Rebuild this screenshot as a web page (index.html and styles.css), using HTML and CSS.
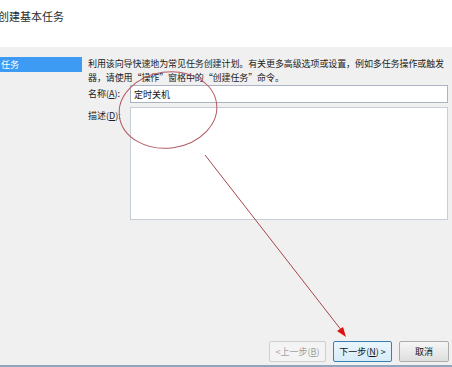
FILE: index.html
```html
<!DOCTYPE html>
<html lang="zh-CN">
<head>
    <meta charset="UTF-8">
    <title>创建基本任务向导</title>
    <link rel="stylesheet" href="styles.css">
</head>
<body>
    <div class="wizard">
        <div class="header">
            <h1>创建基本任务</h1>
        </div>
        <div class="main">
            <div class="nav">
                <div class="nav-item active">任务</div>
            </div>
            <div class="content">
                <p class="intro">利用该向导快速地为常见任务创建计划。有关更多高级选项或设置，例如多任务操作或触发器，请使用“操作”窗格中的“创建任务”命令。</p>
                <div class="field field-name">
                    <label for="task-name">名称(<u>A</u>):</label>
                    <input type="text" id="task-name" value="定时关机">
                </div>
                <div class="field">
                    <label for="task-desc">描述(<u>D</u>):</label>
                    <textarea id="task-desc"></textarea>
                </div>
            </div>
        </div>
        <div class="footer">
            <button class="btn btn-back" disabled>&lt;上一步(<u>B</u>)</button>
            <button class="btn btn-default">下一步(<u>N</u>) &gt;</button>
            <button class="btn btn-cancel">取消</button>
        </div>
        <div class="bottom-bar"></div>

        <svg class="annotation" width="452" height="367" viewBox="0 0 452 367">
            <ellipse cx="168" cy="110" rx="49" ry="38" transform="rotate(-8 168 110)" fill="none" stroke="#b25a62" stroke-width="1"/>
            <line x1="205" y1="155" x2="342" y2="331" stroke="#a8444c" stroke-width="1"/>
            <polygon points="346,337 337,331 343,327" fill="#e01010"/>
        </svg>
    </div>
</body>
</html>
```

FILE: styles.css
```css
* {
    margin: 0;
    padding: 0;
    box-sizing: border-box;
}

body {
    font-family: "Noto Sans CJK SC", "DejaVu Sans", sans-serif;
    background-color: #f0f0f0;
    width: 452px;
    height: 367px;
    overflow: hidden;
}

.wizard {
    position: relative;
    display: flex;
    flex-direction: column;
    height: 367px;
}

.header {
    background-color: #ffffff;
    height: 47px;
    padding-top: 7px;
}

.header h1 {
    font-size: 11px;
    font-weight: normal;
    color: #2b2b2b;
    text-indent: -2px;
    line-height: 18px;
}

.main {
    display: flex;
    flex: 1;
    padding-top: 10px;
}

.nav {
    width: 88px;
    padding-right: 6px;
}

.nav-item {
    height: 15px;
    font-size: 9px;
    line-height: 15px;
    padding-left: 1px;
    color: #333;
}

.nav-item.active {
    background-color: #3d9bf3;
    color: #ffffff;
}

.content {
    width: 360px;
}

.intro {
    font-size: 9px;
    line-height: 14px;
    color: #222;
    padding-right: 3px;
    letter-spacing: -0.1px;
}

.field {
    display: flex;
    margin-top: 4px;
}

.field-name {
    margin-top: 0;
}

.field label {
    width: 42px;
    font-size: 9px;
    line-height: 17px;
    color: #222;
}

.field u {
    text-decoration: underline;
}

input,
textarea {
    flex: 1;
    border: 1px solid #abb4c0;
    background-color: #ffffff;
    font-family: inherit;
    font-size: 9px;
    color: #111;
    outline: none;
}

input {
    height: 18px;
    padding: 0 3px;
}

textarea {
    height: 113px;
    resize: none;
    border-color: #c8ced6;
}

.footer {
    display: flex;
    justify-content: flex-end;
    gap: 7px;
    padding-right: 3px;
    padding-bottom: 3px;
}

.btn {
    height: 21px;
    font-family: inherit;
    font-size: 9px;
    white-space: nowrap;
    color: #111;
    background: linear-gradient(to bottom, #f6f6f6, #dedede);
    border: 1px solid #acacac;
    border-radius: 2px;
    padding: 0;
}

.btn-back {
    width: 57px;
}

.btn:disabled {
    color: #a0a0a0;
    background: #f4f4f4;
    border-color: #cfcfcf;
}

.btn-default {
    width: 59px;
    border-color: #3c7fb1;
    background: linear-gradient(to bottom, #eaf6fd, #d6ecf8);
}

.btn-cancel {
    width: 50px;
}

.bottom-bar {
    height: 2px;
    background-color: #8ea6bd;
}

.annotation {
    position: absolute;
    left: 0;
    top: 0;
    pointer-events: none;
}
```
